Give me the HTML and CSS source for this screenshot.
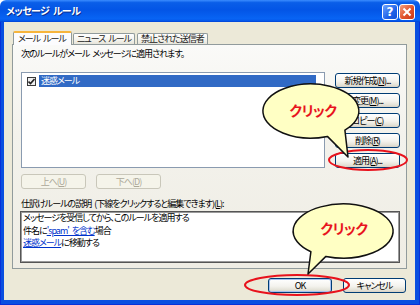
FILE: index.html
```html
<!DOCTYPE html>
<html lang="ja">
  <head>
    <meta charset="UTF-8" />
    <title>メッセージ ルール</title>
    <link rel="stylesheet" href="styles.css">
  </head>
  <body>
    <div class="window">
      <div class="titlebar">
        <span class="title">メッセージ ルール</span>
        <div class="caption">
          <span class="cap help">?</span>
          <span class="cap close">
            <svg width="10" height="10" viewBox="0 0 10 10"><path d="M1.5 1.5 L8.5 8.5 M8.5 1.5 L1.5 8.5" stroke="#fff" stroke-width="2" /></svg>
          </span>
        </div>
      </div>
      <div class="frame">
        <div class="client">
          <ul class="tabs">
            <li class="tab active">メール ルール</li>
            <li class="tab">ニュース ルール</li>
            <li class="tab">禁止された送信者</li>
          </ul>
          <div class="panel">
            <p class="label">次のルールがメール メッセージに適用されます。</p>
            <div class="rules-row">
              <div class="listbox">
                <div class="rule-item">
                  <span class="check">
                    <svg width="7" height="7" viewBox="0 0 7 7"><path d="M0.5 3.5 L2.5 5.5 L6.5 1" fill="none" stroke="#222" stroke-width="1.6" /></svg>
                  </span>
                  <span class="rule-name">迷惑メール</span>
                </div>
              </div>
              <div class="side-buttons">
                <button class="btn">新規作成(<u>N</u>)...</button>
                <button class="btn">変更(<u>M</u>)...</button>
                <button class="btn">コピー(<u>C</u>)</button>
                <button class="btn">削除(<u>R</u>)</button>
                <button class="btn">適用(<u>A</u>)...</button>
              </div>
            </div>
            <div class="move-row">
              <button class="btn" disabled>上へ(<u>U</u>)</button>
              <button class="btn" disabled>下へ(<u>D</u>)</button>
            </div>
            <p class="label">仕訳けルールの説明 (下線をクリックすると編集できます)(<u>L</u>):</p>
            <div class="desc">
              <p>メッセージを受信してから、このルールを適用する</p>
              <p>件名に<a href="#">'spam' を含む</a>場合</p>
              <p><a href="#">迷惑メール</a>に移動する</p>
            </div>
          </div>
          <div class="dialog-buttons">
            <button class="btn default">OK</button>
            <button class="btn">キャンセル</button>
          </div>
        </div>
      </div>

      <!-- annotations drawn over the dialog -->
      <svg class="notes" width="420" height="305" viewBox="0 0 420 305">
        <ellipse class="ring" cx="368" cy="160" rx="39" ry="10" />
        <ellipse class="ring" cx="297" cy="285" rx="52" ry="10" />
        <path class="bubble" d="M327.4 136.4 A48 27 0 1 1 344.9 130.1 L348 157 Z" />
        <text class="bubble-text" x="313" y="116">クリック</text>
        <path class="bubble" d="M310.9 251.7 A50 27 0 1 1 325.9 256.4 L308 274 Z" />
        <text class="bubble-text" x="344" y="234">クリック</text>
      </svg>
    </div>
  </body>
</html>
```

FILE: styles.css
```css
* {
  margin: 0;
  padding: 0;
  box-sizing: border-box;
}

ul {
  list-style: none;
}

body {
  width: 420px;
  height: 305px;
  font-family: "Noto Sans CJK JP", sans-serif;
  font-size: 9px;
  letter-spacing: -1px;
  word-spacing: 2px;
  font-feature-settings: "palt";
  color: #000;
  overflow: hidden;
}

.window {
  position: relative;
  width: 420px;
  height: 305px;
  display: flex;
  flex-direction: column;
}

/* title bar */
.titlebar {
  height: 22px;
  flex: none;
  display: flex;
  align-items: center;
  justify-content: space-between;
  padding: 0 5px 0 6px;
  border-radius: 6px 6px 0 0;
  background: linear-gradient(#3b8cff 0%, #0a5ee8 12%, #0355e6 45%, #0864f4 85%, #0457ea 95%, #0340d0 100%);
}
.titlebar .title {
  color: #fff;
  font-weight: bold;
  font-size: 10px;
  letter-spacing: -0.6px;
  line-height: 14px;
  text-shadow: 1px 1px 0 #0a2c8a;
}
.caption {
  display: flex;
  gap: 1px;
  margin-top: 1px;
}
.cap {
  width: 16px;
  height: 16px;
  border: 1px solid #fff;
  border-radius: 3px;
  display: flex;
  align-items: center;
  justify-content: center;
  color: #fff;
  font-family: "DejaVu Sans", sans-serif;
  font-weight: bold;
  font-size: 12px;
  letter-spacing: 0;
}
.cap.help {
  background: linear-gradient(135deg, #6ea3ff, #1f63e8 60%, #1550d8);
}
.cap.close {
  background: linear-gradient(135deg, #f3a07f, #e0522a 55%, #c8381a);
}

/* window frame */
.frame {
  flex: 1;
  display: flex;
  background: #0a4fe0;
  padding: 0 4px 4px 3px;
  border-left: 1px solid #0831d9;
  border-right: 1px solid #0831d9;
  border-bottom: 1px solid #0831d9;
}
.frame .client {
  flex: 1;
  display: flex;
  flex-direction: column;
  background: #ece9d8;
  padding: 9px 8px 0 8px;
}

/* tabs */
.tabs {
  display: flex;
  align-items: flex-end;
  height: 13px;
  padding-left: 1px;
  position: relative;
  z-index: 1;
}
.tabs .tab {
  height: 11px;
  line-height: 10px;
  padding: 0 3px;
  margin-right: 2px;
  border: 1px solid #919b9c;
  border-bottom: none;
  border-radius: 2px 2px 0 0;
  background: linear-gradient(#ffffff, #f3f2ec 60%, #e6e4da);
  color: #222;
  white-space: nowrap;
}
.tabs .tab.active {
  height: 14px;
  line-height: 12px;
  margin-bottom: -1px;
  padding: 0 5px 0 4px;
  margin-right: 1px;
  border-top: 2px solid #f7b53c;
  background: #fcfcfe;
}

.panel {
  height: 225px;
  border: 1px solid #919b9c;
  background: linear-gradient(#fafaf8, #f3f2ec 40%, #efede4);
  padding: 3px 6px 0 8px;
}
.panel .label {
  line-height: 12px;
  height: 12px;
  white-space: nowrap;
}

.rules-row {
  display: flex;
  margin-top: 12px;
}
.listbox {
  width: 304px;
  height: 96px;
  background: #fff;
  border: 1px solid #8a9bb0;
  padding: 2px 8px 0 5px;
}
.rule-item {
  display: flex;
  align-items: center;
  gap: 3px;
  height: 12px;
}
.check {
  width: 9px;
  height: 9px;
  border: 1px solid #3a3a3a;
  background: #f0f0f0;
  display: flex;
  align-items: center;
  justify-content: center;
}
.rule-name {
  flex: 1;
  height: 12px;
  line-height: 12px;
  background: #316ac5;
  color: #fff;
  padding-left: 2px;
}
.side-buttons {
  display: flex;
  flex-direction: column;
  gap: 5px;
  margin-left: 10px;
  padding-top: 1px;
}

/* buttons */
.btn {
  width: 65px;
  height: 15px;
  font: inherit;
  line-height: 12px;
  letter-spacing: -1px;
  color: #000;
  border: 1px solid #003c74;
  border-radius: 3px;
  background: linear-gradient(#ffffff, #f4f3ee 55%, #e3e1d6 85%, #d6d0c5);
  white-space: nowrap;
}
.btn u {
  text-decoration: underline;
}
.btn:disabled {
  color: #aca899;
  border-color: #c9c7ba;
  background: #f5f4ea;
}
.btn.default {
  width: 64px;
  box-shadow: inset 0 0 0 1px #a6c1ef;
}

.move-row {
  display: flex;
  gap: 10px;
  margin-top: 6px;
}
.move-row + .label {
  margin-top: 9px;
}

.desc {
  margin-top: 1px;
  margin-left: -1px;
  width: 380px;
  height: 52px;
  background: #fff;
  border: 1px solid #555;
  box-shadow: inset 1px 1px 0 #9a9a9a, inset -1px -1px 0 #9a9a9a;
  padding: 0 2px;
}
.desc p {
  line-height: 12.5px;
  white-space: nowrap;
}
.desc a {
  color: #0033cc;
  text-decoration: underline;
}

.dialog-buttons {
  display: flex;
  justify-content: flex-end;
  gap: 11px;
  margin-top: 9px;
  padding-right: 1px;
}
.dialog-buttons .btn:last-child {
  width: 63px;
}

/* annotation overlay */
.notes {
  position: absolute;
  left: 0;
  top: 0;
  pointer-events: none;
}
.notes .ring {
  fill: none;
  stroke: #e8121c;
  stroke-width: 2;
}
.notes .bubble {
  fill: #ffffc4;
  stroke: #111;
  stroke-width: 1.5;
  stroke-linejoin: round;
}
.notes .bubble-text {
  fill: #e8141e;
  font-family: "Noto Sans CJK JP", sans-serif;
  font-weight: bold;
  font-size: 14px;
  letter-spacing: -0.5px;
  word-spacing: 0;
  text-anchor: middle;
}
```
